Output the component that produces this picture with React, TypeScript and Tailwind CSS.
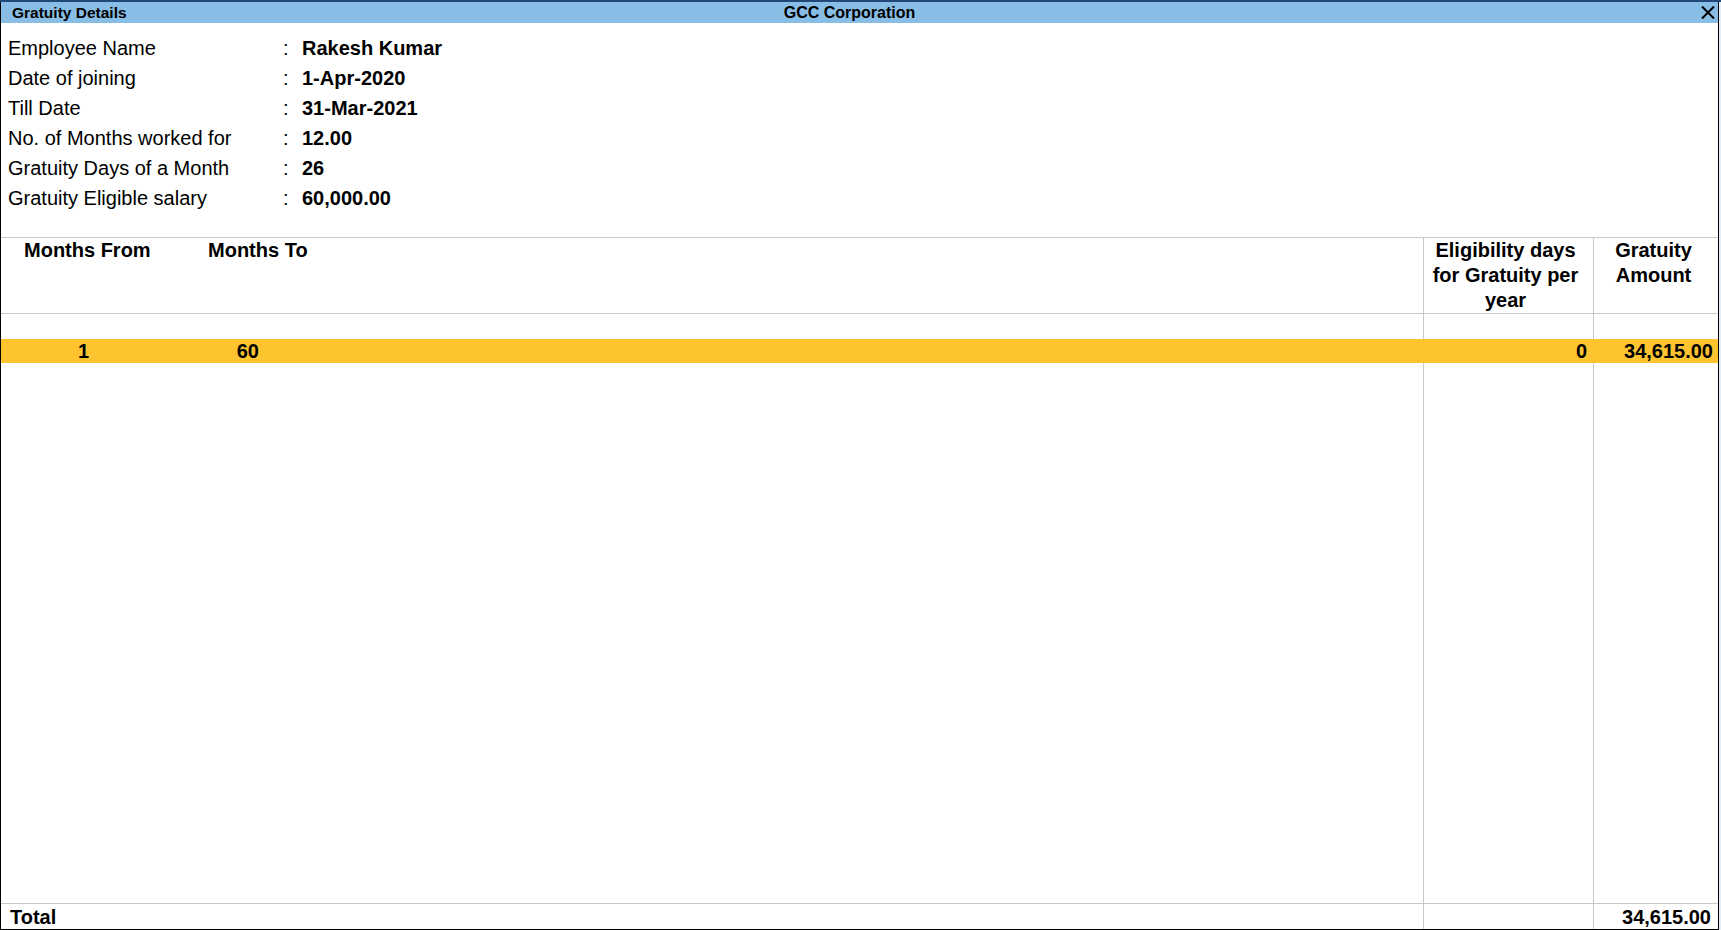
import React from "react";

const details = [
  { label: "Employee Name", value: "Rakesh Kumar" },
  { label: "Date of joining", value: "1-Apr-2020" },
  { label: "Till Date", value: "31-Mar-2021" },
  { label: "No. of Months worked for", value: "12.00" },
  { label: "Gratuity Days of a Month", value: "26" },
  { label: "Gratuity Eligible salary", value: "60,000.00" },
];

const slabs = [{ from: "1", to: "60", days: "0", amount: "34,615.00" }];

function CloseIcon() {
  return (
    <svg width="14" height="13" viewBox="0 0 14 13" className="block">
      <path d="M1 0.5 L13 12.5 M13 0.5 L1 12.5" stroke="#000" strokeWidth="2" fill="none" />
    </svg>
  );
}

export default function App() {
  return (
    <div className="w-[1721px] h-[930px] bg-white flex flex-col text-black font-['Liberation_Sans',Arial,sans-serif] overflow-hidden">
      {/* top accent */}
      <div className="h-[2px] bg-[#1f4778] shrink-0" />

      <div className="flex flex-1 min-h-0">
        <div className="w-[1719px] flex flex-col border-l border-r border-b border-black">
          {/* Title bar */}
          <div className="h-[21px] bg-[#88bde6] grid grid-cols-[1fr_auto_1fr] items-center shrink-0 leading-none">
            <span className="pl-[11px] text-[15.5px] font-bold">Gratuity Details</span>
            <span className="pr-[20px] text-[16px] font-bold">GCC Corporation</span>
            <div className="flex justify-end pr-[3px]">
              <CloseIcon />
            </div>
          </div>

          {/* Employee details */}
          <div className="pt-[10px] pb-[24px] shrink-0">
            {details.map((d) => (
              <div key={d.label} className="flex items-center h-[30px] text-[20px] leading-none">
                <span className="w-[282px] pl-[7px] whitespace-nowrap">{d.label}</span>
                <span className="w-[19px]">:</span>
                <span className="font-bold whitespace-nowrap">{d.value}</span>
              </div>
            ))}
          </div>

          {/* Table */}
          <div className="flex-1 flex flex-col min-h-0 border-t border-[#c8c8c8] text-[20px] font-bold">
            {/* Header */}
            <div className="flex h-[76px] border-b border-[#c8c8c8] leading-[25px] shrink-0 whitespace-nowrap">
              <div className="w-[175px] pl-[23px]">Months From</div>
              <div className="w-[140px] pl-[32px]">Months To</div>
              <div className="flex-1" />
              <div className="w-[170px] border-l border-[#c8c8c8] text-center pr-[6px]">
                Eligibility days
                <br />
                for Gratuity per
                <br />
                year
              </div>
              <div className="w-[125px] border-l border-[#c8c8c8] text-center pr-[5px]">
                Gratuity
                <br />
                Amount
              </div>
            </div>

            {/* spacer row */}
            <div className="flex h-[25px] shrink-0">
              <div className="flex-1" />
              <div className="w-[170px] border-l border-[#c8c8c8]" />
              <div className="w-[125px] border-l border-[#c8c8c8]" />
            </div>

            {slabs.map((s) => (
              <div key={s.from} className="flex h-[24px] items-center bg-[#fec430] leading-none shrink-0 whitespace-nowrap">
                <div className="w-[165px] text-center">{s.from}</div>
                <div className="w-[93px] text-right">{s.to}</div>
                <div className="flex-1" />
                <div className="w-[170px] text-right pr-[6px]">{s.days}</div>
                <div className="w-[125px] text-right pr-[5px]">{s.amount}</div>
              </div>
            ))}

            {/* filler */}
            <div className="flex flex-1">
              <div className="flex-1" />
              <div className="w-[170px] border-l border-[#c8c8c8]" />
              <div className="w-[125px] border-l border-[#c8c8c8]" />
            </div>

            {/* Total */}
            <div className="flex h-[26px] items-center border-t border-[#c8c8c8] leading-none shrink-0">
              <div className="flex-1 pl-[9px] h-full flex items-center">Total</div>
              <div className="w-[170px] h-full border-l border-[#c8c8c8]" />
              <div className="w-[125px] h-full border-l border-[#c8c8c8] flex items-center justify-end pr-[7px]">
                34,615.00
              </div>
            </div>
          </div>
        </div>
        <div className="w-[2px] bg-[#e4eef8]" />
      </div>
    </div>
  );
}
